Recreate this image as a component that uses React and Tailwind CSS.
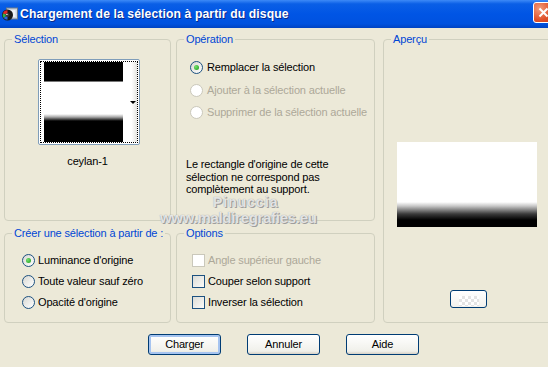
import React from "react";

const Radio = ({ checked, disabled }) => (
  <span
    className={
      disabled
        ? "w-[13px] h-[13px] rounded-full border border-[#cac8bb] bg-white shrink-0 flex items-center justify-center"
        : "w-[13px] h-[13px] rounded-full border border-[#1c5180] bg-[linear-gradient(135deg,#d8d8d2,#ffffff)] shrink-0 flex items-center justify-center"
    }
  >
    {checked && <span className="w-[5px] h-[5px] rounded-full bg-[radial-gradient(circle_at_35%_35%,#74e06c,#1a9a1a)]" />}
  </span>
);

const Check = ({ disabled }) => (
  <span
    className={
      disabled
        ? "w-[13px] h-[13px] border border-[#cac8bb] bg-white shrink-0"
        : "w-[13px] h-[13px] border border-[#1c5180] bg-[linear-gradient(135deg,#dcdcd6,#fbfbf9)] shrink-0"
    }
  />
);

const Group = ({ title, className, children }) => (
  <fieldset className={`border border-[#d0d0bf] rounded-[4px] ${className}`}>
    <legend className="ml-[7px] px-[2px] leading-[13px] text-[#0046d5] whitespace-nowrap">{title}</legend>
    {children}
  </fieldset>
);

const Button = ({ label, focus }) => (
  <button
    className={
      focus
        ? "w-[73px] h-[21px] rounded-[3px] border border-[#003c74] bg-[linear-gradient(to_bottom,#ffffff,#f0f0ea_85%,#d6d0c5)] shadow-[inset_0_0_0_2px_#a6c4f0] text-[11px] leading-[19px] text-black"
        : "w-[73px] h-[21px] rounded-[3px] border border-[#003c74] bg-[linear-gradient(to_bottom,#ffffff,#f0f0ea_85%,#d6d0c5)] text-[11px] leading-[19px] text-black"
    }
  >
    {label}
  </button>
);

export default function App() {
  return (
    <div className="relative w-[548px] h-[367px] overflow-hidden bg-[#ece9d8] font-['Liberation_Sans',Arial,sans-serif] text-[11px] tracking-[-0.15px] text-black">
      {/* title bar */}
      <div className="h-[28px] flex items-center bg-[linear-gradient(to_bottom,#3d8af7_0%,#0a5fe6_14%,#0055e5_50%,#0052df_85%,#0043c2_100%)]">
        <svg width="18" height="16" viewBox="0 0 17 16" className="ml-[1px] shrink-0">
          <rect x="5" y="2" width="11" height="11" fill="#cfd6e0" stroke="#6b7a8c" />
          <rect x="7" y="4" width="7" height="7" fill="#eef2f6" />
          <circle cx="6" cy="9" r="5.5" fill="#1a1a1a" />
          <path d="M6 4.2 A4.8 4.8 0 0 0 1.4 7.5 L6 9 Z" fill="#e02828" />
          <path d="M1.4 7.5 A4.8 4.8 0 0 0 2.2 12 L6 9 Z" fill="#2fb04a" />
          <path d="M2.2 12 A4.8 4.8 0 0 0 6 13.8 L6 9 Z" fill="#2a68e0" />
          <circle cx="6" cy="9" r="2" fill="#3a3a3a" />
          <circle cx="5.4" cy="8.4" r="0.7" fill="#ffffff" />
        </svg>
        <span className="ml-[1px] text-[12.2px] font-bold text-white tracking-[0.1px] [text-shadow:1px_1px_0_#0a2a8a]">
          Chargement de la sélection à partir du disque
        </span>
        <div className="ml-auto -mr-[6px] mt-[-4px] w-[21px] h-[21px] shrink-0 rounded-[3px] border border-white bg-[radial-gradient(circle_at_30%_30%,#f29c7c,#e0512a_60%,#c43a16)] flex items-center justify-center">
          <svg width="11" height="11" viewBox="0 0 11 11">
            <path d="M1.5 1.5 L9.5 9.5 M9.5 1.5 L1.5 9.5" stroke="#ffffff" strokeWidth="2" />
          </svg>
        </div>
      </div>

      {/* groups */}
      <div className="flex pt-[5px] pl-[4px]">
        <div className="flex flex-col gap-[6px] w-[167px] shrink-0">
          <Group title="Sélection" className="h-[188px]">
            <div className="ml-[33px] mt-[13px] w-[102px] h-[86px] border border-[#7f9db9] rounded-[2px] bg-white p-[1px]">
              <div className="h-full border border-dotted border-black flex pl-[3px] pt-0">
                <div className="w-[79px] h-[80px] bg-[linear-gradient(to_bottom,#000_0px,#000_19px,#777_19.5px,#fff_20.5px,#fff_52px,#aaa_55px,#000_59px,#000_100%)]" />
                <div className="flex-1 flex items-center justify-end pr-[1px] bg-[linear-gradient(to_right,#ffffff_60%,#e4e4e0)]">
                  <span className="w-0 h-0 border-l-[3px] border-r-[3px] border-t-[3px] border-l-transparent border-r-transparent border-t-black" />
                </div>
              </div>
            </div>
            <div className="mt-[10px] text-center leading-[13px]">ceylan-1</div>
          </Group>
          <Group title="Créer une sélection à partir de :" className="h-[96px]">
            <div className="mt-[10px] pl-[17px] flex flex-col">
              <div className="h-[21px] flex items-center gap-[3px]">
                <Radio checked />
                <span>Luminance d'origine</span>
              </div>
              <div className="h-[21px] flex items-center gap-[3px]">
                <Radio />
                <span>Toute valeur sauf zéro</span>
              </div>
              <div className="h-[21px] flex items-center gap-[3px]">
                <Radio />
                <span>Opacité d'origine</span>
              </div>
            </div>
          </Group>
        </div>

        <div className="ml-[5px] flex flex-col gap-[6px] w-[199px] shrink-0">
          <Group title="Opération" className="h-[188px]">
            <div className="mt-[10px] pl-[13px] flex flex-col">
              <div className="h-[23px] flex items-center gap-[4px]">
                <Radio checked />
                <span>Remplacer la sélection</span>
              </div>
              <div className="h-[22px] flex items-center gap-[4px] text-[#aca899]">
                <Radio disabled />
                <span>Ajouter à la sélection actuelle</span>
              </div>
              <div className="h-[22px] flex items-center gap-[4px] text-[#aca899]">
                <Radio disabled />
                <span>Supprimer de la sélection actuelle</span>
              </div>
            </div>
            <p className="mt-[35px] pl-[9px] leading-[12.5px]">
              Le rectangle d'origine de cette
              <br />
              sélection ne correspond pas
              <br />
              complètement au support.
            </p>
          </Group>
          <Group title="Options" className="h-[96px]">
            <div className="mt-[10px] pl-[15px] flex flex-col">
              <div className="h-[21px] flex items-center gap-[3px] text-[#aca899]">
                <Check disabled />
                <span>Angle supérieur gauche</span>
              </div>
              <div className="h-[21px] flex items-center gap-[3px]">
                <Check />
                <span>Couper selon support</span>
              </div>
              <div className="h-[21px] flex items-center gap-[3px]">
                <Check />
                <span>Inverser la sélection</span>
              </div>
            </div>
          </Group>
        </div>

        <div className="ml-[8px] w-[169px] shrink-0">
          <Group title="Aperçu" className="h-[290px] flex flex-col">
            <div className="mt-[96px] ml-[13px] w-[140px] h-[85px] bg-[linear-gradient(to_bottom,#fff_0px,#fff_60px,#c8c8c8_64px,#3a3a3a_72px,#000_78px,#000_100%)]" />
            <div className="mt-[63px] ml-[66px] w-[37px] h-[18px] rounded-[3px] border border-[#003c74] bg-[linear-gradient(to_bottom,#ffffff,#f2f1ec)] flex items-end justify-center pb-[1px]">
              <div className="w-[20px] h-[10px] bg-[conic-gradient(#e4e4e4_25%,#ffffff_0_50%,#e4e4e4_0_75%,#ffffff_0)] bg-[length:6px_6px]" />
            </div>
          </Group>
        </div>
      </div>

      {/* buttons */}
      <div className="mt-[11px] pl-[148px] flex gap-[26px]">
        <Button label="Charger" focus />
        <Button label="Annuler" />
        <Button label="Aide" />
      </div>

      {/* watermark */}
      <div className="absolute left-[213px] top-[195px] text-[14px] leading-[14px] font-bold text-white/75 tracking-[1px] [text-shadow:0_0_1px_#8a8a8a,1px_1px_0_#a0a0a0]">
        Pinuccia
      </div>
      <div className="absolute left-[160px] top-[211px] text-[15px] leading-[14px] font-bold text-white/75 tracking-[-0.3px] [text-shadow:0_0_1px_#8a8a8a,1px_1px_0_#a0a0a0]">
        www.maldiregrafies.eu
      </div>
    </div>
  );
}
